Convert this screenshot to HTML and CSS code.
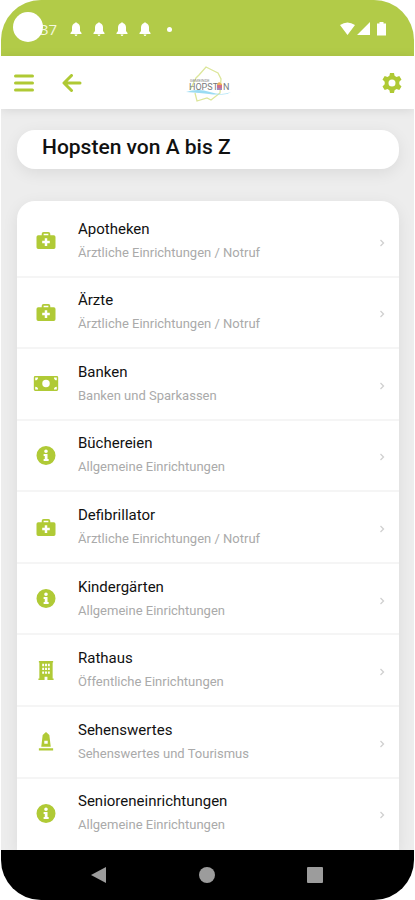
FILE: index.html
```html
<!DOCTYPE html>
<html lang="de">
<head>
<meta charset="utf-8">
<meta name="viewport" content="width=device-width, initial-scale=1">
<title>Hopsten von A bis Z</title>
<link rel="stylesheet" href="styles.css">
</head>
<body>
<svg class="defs" aria-hidden="true">
  <symbol id="medical" viewBox="0 0 20 20">
    <path fill-rule="evenodd" d="M5.500 4.500V3Q5.500 1 7.500 1H12.500Q14.500 1 14.500 3V4.500H18.200Q20 4.500 20 6.300V17.200Q20 19 18.200 19H1.800Q0 19 0 17.200V6.300Q0 4.500 1.800 4.500ZM7.500 4.500H12.500V3H7.500ZM8.700 7.500V10.200H6V13H8.700V15.700H11.300V13H14V10.200H11.300V7.500Z"/>
  </symbol>
  <symbol id="money" viewBox="0 0 26 16">
    <path fill-rule="evenodd" d="M1.500 0H24.500Q26 0 26 1.500V14.500Q26 16 24.500 16H1.500Q0 16 0 14.500V1.500Q0 0 1.500 0ZM1.500 4.500Q4.500 4.500 4.500 1.500H1.500ZM21.500 1.500Q21.500 4.500 24.500 4.500V1.500ZM1.500 11.500V14.500H4.500Q4.500 11.500 1.500 11.500ZM24.500 11.500Q21.500 11.500 21.500 14.500H24.500ZM13 4A4 4 0 1 0 13 12A4 4 0 1 0 13 4Z"/>
  </symbol>
  <symbol id="info" viewBox="0 0 20 20">
    <path fill-rule="evenodd" d="M10 0A10 10 0 1 0 10 20A10 10 0 1 0 10 0ZM10 3.600A1.900 1.900 0 1 1 10 7.400A1.900 1.900 0 1 1 10 3.600ZM7.500 8.500H11.600V13.800H12.800V15.700H7.500V13.800H8.700V10.400H7.500Z"/>
  </symbol>
  <symbol id="building" viewBox="0 0 16 20">
    <path fill-rule="evenodd" d="M.500 0H15.500V1.500H15V18.500H16V20H9.500V16.500H6.500V20H0V18.500H1V1.500H.500ZM4 3V5.500H6V3ZM7 3V5.500H9V3ZM10 3V5.500H12V3ZM4 7V9.500H6V7ZM7 7V9.500H9V7ZM10 7V9.500H12V7ZM4 11V13.500H6V11ZM7 11V13.500H9V11ZM10 11V13.500H12V11Z"/>
  </symbol>
  <symbol id="monument" viewBox="0 0 16 20">
    <path fill-rule="evenodd" d="M8 0L11.500 3.200L13 15.500H3L4.500 3.200ZM6.200 9.200V12.400H9.800V9.200ZM.500 17H15.500V19.500H.500Z"/>
  </symbol>
  <symbol id="chevron" viewBox="0 0 6 8">
    <path d="M1.500 1L4.500 4L1.500 7" fill="none" stroke="currentColor" stroke-width="1.300"/>
  </symbol>
  <symbol id="bell" viewBox="0 0 12 14">
    <path d="M5 1Q6-.500 7 1Q10 2 10 5.500V9L11.500 11V12H.500V11L2 9V5.500Q2 2 5 1ZM4.500 12.500H7.500Q7 14 6 14T4.500 12.500Z"/>
  </symbol>
</svg>
<div class="screen">
  <div class="status">
    <span class="camera"></span>
    <span class="clock">37</span>
    <div class="notices">
      <svg class="bell"><use href="#bell"/></svg>
      <svg class="bell"><use href="#bell"/></svg>
      <svg class="bell"><use href="#bell"/></svg>
      <svg class="bell"><use href="#bell"/></svg>
      <span class="dot"></span>
    </div>
    <svg class="signals" viewBox="0 0 48 16" aria-hidden="true">
      <path d="M1 4Q8.500-1 16 4L8.500 14ZM18 14L31 1V14ZM38 2.500H40.500V1H44.500V2.500H47V14.500H38Z"/>
    </svg>
  </div>
  <header class="bar">
    <button class="tool" aria-label="Menü">
      <svg width="20" height="18" viewBox="0 0 20 18"><path d="M1.500 2H18.500M1.500 9H18.500M1.500 16H18.500" class="line"/></svg>
    </button>
    <button class="tool" aria-label="Zurück">
      <svg width="20" height="18" viewBox="0 0 20 18"><path d="M9.500 1.500L2 9L9.500 16.500M2.500 9H18" class="line"/></svg>
    </button>
    <svg class="logo" viewBox="0 0 48 40" role="img" aria-label="Gemeinde Hopsten">
      <path d="M4 25L10 13L13 10L20 2L28 6L32 8L35 14L34 28L25 35L21 33L11 36L9 28" fill="none" stroke="#dce69a" stroke-width="1.300"/>
      <path d="M0 27Q12 23 24 27T45 27L41 29Q31 30 23 29T0 27Z" fill="#9bdcf3"/>
      <text x="4" y="17" class="logo-small">GEMEINDE</text>
      <text x="3" y="25" class="logo-name">HOPST</text>
      <text x="37" y="25" class="logo-name">N</text>
      <path d="M31 19H36V25H31Z" fill="#cf718e"/>
      <path d="M31 19L33 17L36 19V20H31Z" fill="#efb05c"/>
      <path d="M31 23H36V25H31Z" fill="#a68ab7"/>
    </svg>
    <button class="tool settings" aria-label="Einstellungen">
      <svg width="20" height="20" viewBox="0 0 20 20"><path fill-rule="evenodd" d="M8 0H12L12.600 2.800L14.500 3.900L17.300 3L19.500 6.500L17.300 8.700V11.300L19.500 13.500L17.300 17L14.500 16.100L12.600 17.200L12 20H8L7.400 17.200L5.500 16.100L2.700 17L.500 13.500L2.700 11.300V8.700L.500 6.500L2.700 3L5.500 3.900L7.400 2.800ZM10 6.500A3.500 3.500 0 1 0 10 13.500A3.500 3.500 0 1 0 10 6.500Z"/></svg>
    </button>
  </header>
  <main class="content">
    <h1 class="title">Hopsten von A bis Z</h1>
    <ul class="list">
      <li><a href="#"><svg class="icon"><use href="#medical"/></svg><span class="label"><b>Apotheken</b><small>Ärztliche Einrichtungen / Notruf</small></span><svg class="chevron"><use href="#chevron"/></svg></a></li>
      <li><a href="#"><svg class="icon"><use href="#medical"/></svg><span class="label"><b>Ärzte</b><small>Ärztliche Einrichtungen / Notruf</small></span><svg class="chevron"><use href="#chevron"/></svg></a></li>
      <li><a href="#"><svg class="icon wide"><use href="#money"/></svg><span class="label"><b>Banken</b><small>Banken und Sparkassen</small></span><svg class="chevron"><use href="#chevron"/></svg></a></li>
      <li><a href="#"><svg class="icon"><use href="#info"/></svg><span class="label"><b>Büchereien</b><small>Allgemeine Einrichtungen</small></span><svg class="chevron"><use href="#chevron"/></svg></a></li>
      <li><a href="#"><svg class="icon"><use href="#medical"/></svg><span class="label"><b>Defibrillator</b><small>Ärztliche Einrichtungen / Notruf</small></span><svg class="chevron"><use href="#chevron"/></svg></a></li>
      <li><a href="#"><svg class="icon"><use href="#info"/></svg><span class="label"><b>Kindergärten</b><small>Allgemeine Einrichtungen</small></span><svg class="chevron"><use href="#chevron"/></svg></a></li>
      <li><a href="#"><svg class="icon"><use href="#building"/></svg><span class="label"><b>Rathaus</b><small>Öffentliche Einrichtungen</small></span><svg class="chevron"><use href="#chevron"/></svg></a></li>
      <li><a href="#"><svg class="icon"><use href="#monument"/></svg><span class="label"><b>Sehenswertes</b><small>Sehenswertes und Tourismus</small></span><svg class="chevron"><use href="#chevron"/></svg></a></li>
      <li><a href="#"><svg class="icon"><use href="#info"/></svg><span class="label"><b>Senioreneinrichtungen</b><small>Allgemeine Einrichtungen</small></span><svg class="chevron"><use href="#chevron"/></svg></a></li>
    </ul>
  </main>
  <nav class="system">
    <button aria-label="Zurück"><svg width="18" height="18" viewBox="0 0 18 18"><path d="M1 9L16 1V17Z"/></svg></button>
    <button aria-label="Startseite"><svg width="18" height="18" viewBox="0 0 18 18"><circle cx="9" cy="9" r="8"/></svg></button>
    <button aria-label="Übersicht"><svg width="18" height="18" viewBox="0 0 18 18"><rect x="1" y="1" width="16" height="16" rx="1"/></svg></button>
  </nav>
</div>
</body>
</html>
```
FILE: styles.css
```css
* { box-sizing: border-box; }
body {
  margin: 0;
  background: #fff;
  font-family: Roboto, "Liberation Sans", sans-serif;
}
.defs { display: none; }
button { padding: 0; border: 0; background: none; color: inherit; fill: currentColor; }
button svg { display: block; }
.screen {
  display: flex;
  flex-direction: column;
  min-height: 100vh;
  margin: 0 1px;
  overflow: hidden;
  border-radius: 40px;
  background: #ededed;
}
.status {
  display: flex;
  align-items: center;
  height: 56px;
  padding: 2px 27px 0 12px;
  background: #b2cb48;
  color: #fff;
  fill: #fff;
}
.camera {
  z-index: 1;
  width: 30px;
  height: 30px;
  margin: 0 -3px 4px 0;
  border-radius: 50%;
  background: #fff;
}
.clock { font: 15px/20px "Open Sans", sans-serif; color: #f4f8df; }
.notices { display: flex; align-items: center; gap: 11px; margin-left: 13px; }
.bell { width: 12px; height: 14px; }
.dot { width: 5px; height: 5px; margin-left: 5px; border-radius: 50%; background: #fff; }
.signals { width: 48px; height: 16px; margin-left: auto; }
.bar {
  position: relative;
  display: flex;
  align-items: center;
  gap: 28px;
  height: 53px;
  padding: 0 12px 0 13px;
  background: #fff;
  box-shadow: 0 1px 10px rgba(0, 0, 0, .1);
}
.tool { color: #afc934; }
.line {
  fill: none;
  stroke: currentColor;
  stroke-width: 3;
  stroke-linecap: round;
  stroke-linejoin: round;
}
.logo {
  position: absolute;
  top: 9px;
  left: calc(50% - 22px);
  width: 48px;
  height: 40px;
}
.logo-name { font: 9px Roboto, sans-serif; fill: #777b7c; }
.logo-small { font: 4px Roboto, sans-serif; fill: #888; }
.settings { margin-left: auto; }
.content {
  display: flex;
  flex: 1;
  flex-direction: column;
  gap: 32px;
  padding: 21px 15px 0 16px;
}
.title {
  margin: 0;
  padding: 5px 25px 10px;
  border-radius: 18px;
  background: #fff;
  box-shadow: 0 4px 16px rgba(0, 0, 0, .08);
  color: #111;
  font-size: 21px;
  font-weight: 500;
  line-height: 24px;
}
.list {
  display: flex;
  flex: 1;
  flex-direction: column;
  margin: 0;
  padding: 5px 0 0;
  border-radius: 18px 18px 0 0;
  background: #fff;
  box-shadow: 0 4px 16px rgba(0, 0, 0, .08);
  list-style: none;
}
.list li { display: flex; flex: 1; border-bottom: 2px solid #f5f5f5; }
.list li:last-child { border-color: transparent; }
.list a {
  display: flex;
  flex: 1;
  align-items: center;
  padding: 0 14px 0 16px;
  color: #111;
  text-decoration: none;
}
.icon { width: 26px; height: 19px; fill: #b0ca36; }
.wide { height: 15px; }
.label { display: flex; flex: 1; flex-direction: column; gap: 4px; margin-left: 19px; }
.label b { font-size: 15px; font-weight: 400; line-height: 20px; }
.label small { color: #aaa; font-size: 13px; line-height: 20px; }
.chevron { width: 6px; height: 8px; margin-top: 4px; color: #d0d0d0; }
.system {
  display: flex;
  align-items: center;
  justify-content: space-between;
  height: 50px;
  padding: 0 90px 0 89px;
  background: #000;
  color: #9c9c9c;
}
```
